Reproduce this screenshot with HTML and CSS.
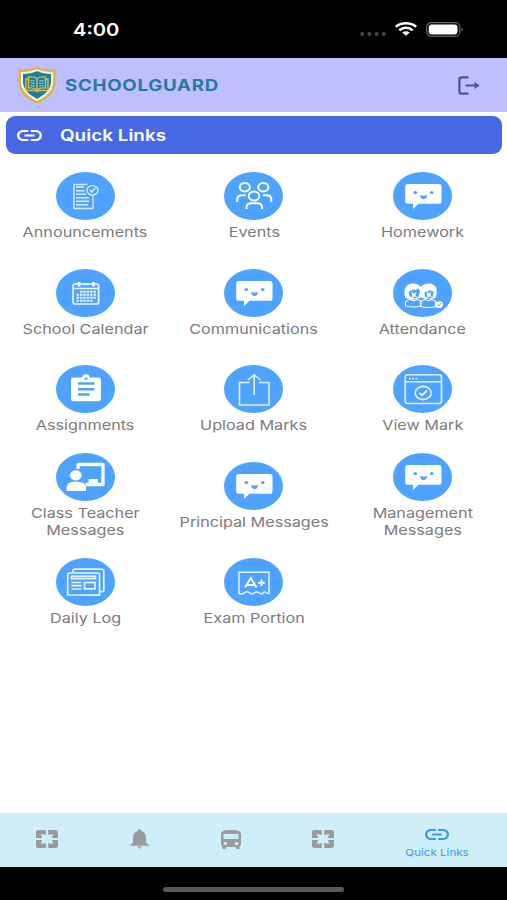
FILE: index.html
```html
<!DOCTYPE html>
<html lang="en">
<head>
    <meta charset="UTF-8">
    <meta name="viewport" content="width=device-width, initial-scale=1.0">
    <title>Schoolguard</title>
    <link rel="stylesheet" href="styles.css">
</head>
<body>
    <!-- Shared icons -->
    <svg class="defs" width="0" height="0">
        <symbol id="chat" viewBox="0 0 58 48">
            <path fill="#fff" d="M14.500 12h31q2.500 0 2.500 2.400v14.800q0 2.600-2.500 2.600H25l-5.500 5.200v-5.200h-5q-2.800 0-2.800-2.600V14.400q0-2.400 2.800-2.400z"/>
            <ellipse cx="21.800" cy="20.500" rx="1.800" ry="1.500" fill="#4da3ff"/>
            <ellipse cx="38.200" cy="20.500" rx="1.800" ry="1.500" fill="#4da3ff"/>
            <path fill="#4da3ff" d="M26.700 23q3.400 1 6.800 0 0 4-3.400 4t-3.400-4z"/>
        </symbol>
        <symbol id="link" viewBox="2 7 20 10" preserveAspectRatio="none">
            <path fill="currentColor" d="M3.900 12c0-1.710 1.390-3.100 3.100-3.100h4V7H7c-2.760 0-5 2.240-5 5s2.240 5 5 5h4v-1.900H7c-1.710 0-3.100-1.390-3.100-3.100zM8 13h8v-2H8v2zm9-6h-4v1.900h4c1.710 0 3.100 1.390 3.100 3.100s-1.390 3.100-3.100 3.100h-4V17h4c2.760 0 5-2.240 5-5s-2.240-5-5-5z"/>
        </symbol>
        <symbol id="pages" viewBox="3 3 18 18" preserveAspectRatio="none">
            <path fill="#9b9b9b" d="M3 5v6h5L7 7l4 1V3H5c-1.100 0-2 .9-2 2zm5 8H3v6c0 1.100.9 2 2 2h6v-5l-4 1 1-4zm9 4l-4-1v5h6c1.100 0 2-.9 2-2v-6h-5l1 4zm2-14h-6v5l4-1-1 4h5V5c0-1.100-.9-2-2-2z"/>
        </symbol>
    </svg>

    <div class="status-bar">
        <span class="time">4:00</span>
        <div class="status-icons">
            <svg width="26" height="6" viewBox="0 0 26 6" fill="#48484a">
                <circle cx="2.200" cy="3" r="2"/>
                <circle cx="9.400" cy="3" r="2"/>
                <circle cx="16.600" cy="3" r="2"/>
                <circle cx="23.800" cy="3" r="2"/>
            </svg>
            <svg class="wifi" width="22" height="14" viewBox="0 0 22 14">
                <g fill="none" stroke="#fff" stroke-width="2.600">
                    <path d="M.8 4.800Q5.200 1.300 11 1.300t10.200 3.500"/>
                    <path d="M4.300 8.400Q7.200 5.700 11 5.700t6.700 2.700"/>
                </g>
                <path fill="#fff" d="M7.200 10.600Q11 7.800 14.800 10.600L11 13.800z"/>
            </svg>
            <svg class="battery" width="38" height="15" viewBox="0 0 38 15">
                <rect x=".7" y=".7" width="33" height="13.600" rx="4.500" fill="none" stroke="#636366" stroke-width="1.200"/>
                <rect x="2.700" y="2.600" width="28.800" height="9.800" rx="3" fill="#fff"/>
                <path d="M35.300 5.200q1.600.7 1.600 2.300t-1.600 2.300z" fill="#636366"/>
            </svg>
        </div>
    </div>

    <header class="header">
        <svg class="logo" width="38" height="38" viewBox="0 0 38 38">
            <path fill="#dfb23c" d="M19 .500Q25 4 37.400 3.500V17Q37 30 19 37.600 1 30 .6 17V3.500Q13 4 19 .500z"/>
            <path fill="#eef4f2" d="M19 3Q25 6 35.200 6V17Q34 28 19 35 4 28 2.800 17V6Q13 6 19 3z"/>
            <path fill="#1f7d9d" d="M19 5Q25 8 33 8V17Q32 26 19 33 6 26 5 17V8Q13 8 19 5z"/>
            <path fill="none" stroke="#d5bd52" stroke-width="1.400" d="M19 12.500Q16 10.500 10.500 11V22Q16 21.500 19 24 22 21.500 27.500 22V11Q22 10.500 19 12.500zV24M10 13H8V24.500H17L19 25.500 21 24.500H30V13H28"/>
            <path stroke="#9fd0ce" stroke-width="1" d="M12.500 14.500l4.500.6M12.500 17l4.500.6M12.500 19.500l4.500.6M25.500 14.500l-4.500.6M25.500 17l-4.500.6M25.500 19.500l-4.500.6"/>
        </svg>
        <span class="brand">SCHOOLGUARD</span>
        <svg class="logout" width="22" height="19" viewBox="0 0 22 19">
            <path d="M10.500 1.400H3.400Q1.400 1.400 1.400 3.200V15.800Q1.400 17.600 3.400 17.600H10.500" fill="none" stroke="#4a5589" stroke-width="2.200"/>
            <path d="M7.500 8.400H16.500V6L21.600 9.500 16.500 13V10.600H7.500z" fill="#4a5589"/>
        </svg>
    </header>

    <div class="banner">
        <svg width="25" height="11"><use href="#link"/></svg>
        <span class="banner-title">Quick Links</span>
    </div>

    <main class="links">
        <div class="link">
            <svg class="icon" viewBox="0 0 58 48">
                <g fill="none" stroke="#d9ecff" stroke-width="1.400">
                    <path d="M31 12.500H17.500V36.500H36.500V24"/>
                    <path d="M19.500 15h8M19.500 18.800h8.500M19.500 22.300h10M19.500 25.800h13M19.500 29.300h13M19.500 32.800h12"/>
                    <ellipse cx="36" cy="18.300" rx="5.600" ry="4.700"/>
                    <path d="M33.500 18l1.700 2L39 15.500"/>
                </g>
            </svg>
            <span class="label">Announcements</span>
        </div>
        <div class="link">
            <svg class="icon" viewBox="0 0 58 48">
                <g fill="none" stroke="#fff" stroke-width="2">
                    <ellipse cx="20.300" cy="15.300" rx="5.100" ry="4.300"/>
                    <ellipse cx="38.800" cy="15.300" rx="5.100" ry="4.300"/>
                    <ellipse cx="29.500" cy="24" rx="5.300" ry="4.500"/>
                    <path d="M12.700 30V27.500Q12.700 23.200 18 23.200H21M46.800 30V27.500Q46.800 23.200 41.500 23.200H38.500"/>
                    <path d="M22 37V35.500Q22 31.300 27 31.300H32.500Q37.500 31.300 37.500 35.500V37"/>
                </g>
            </svg>
            <span class="label">Events</span>
        </div>
        <div class="link">
            <svg class="icon"><use href="#chat"/></svg>
            <span class="label">Homework</span>
        </div>

        <div class="link">
            <svg class="icon" viewBox="0 0 58 48">
                <rect x="16.600" y="15" width="25.500" height="20" rx="2" fill="none" stroke="#eef7ff" stroke-width="1.700"/>
                <path d="M16.500 19.500H42M26 15.500H33" stroke="#eef7ff" stroke-width="1.300"/>
                <path d="M22.500 13V17.500M37 13V17.500" stroke="#eef7ff" stroke-width="2.800"/>
                <path d="M23.400 22.700H39.500M20 25.700H39.500M20 28.700H39.500M20 31.700H36" stroke="#e3f1ff" stroke-width="2.100" stroke-dasharray="2.500 .9"/>
            </svg>
            <span class="label">School Calendar</span>
        </div>
        <div class="link">
            <svg class="icon"><use href="#chat"/></svg>
            <span class="label">Communications</span>
        </div>
        <div class="link">
            <svg class="icon" viewBox="0 0 58 48">
                <path fill="#fff" d="M12 29Q10 25 11.500 20 13 14.500 19.500 14.500 25 14.500 27.300 18 30 14.500 35 14.500 41.500 14.500 43 20 44 25 42 29 34 31.500 27.500 28.500 20 32 12 29z"/>
                <path fill="#4da3ff" d="M15 23l4-2.500 3 .5 3.500-1.500 1 3-1.500 5.500-5 1.500-4-2.500zM31 22.500l3 .5 2-2 4.500 2-1.500 5-4 2-3.500-2.500z"/>
                <path fill="#fff" d="M18 22.500l2 2 3-1.500-1 3 1.500 2-3-.5-2 2 .2-3.300zM33 23l2 1.500 2.500-1.500-.5 3 1.500 2-3-.5-2 2 .2-3.300z"/>
                <path fill="#4da3ff" stroke="#fff" stroke-width="1.100" d="M12 37V34Q12 31 17 30.500L20 32 23 30.500Q27.500 31 27.500 34V37Q20 39 12 37zM27 37.500V34Q28 31 32 30.500L35 32 38 30.500Q42 31 42.500 34V37.500Q35 39.500 27 37.500z"/>
                <ellipse cx="45.500" cy="35.700" rx="4" ry="3.400" fill="#fff"/>
                <path d="M43.700 35.500l1.300 1.500 2.700-3" fill="none" stroke="#4da3ff"/>
            </svg>
            <span class="label">Attendance</span>
        </div>

        <div class="link">
            <svg class="icon" viewBox="0 0 58 48">
                <path fill="#fff" d="M17 12.500H25.500Q26.300 9.200 29.500 9.200T33.500 12.500H42Q44.500 12.500 44.500 14.700V34Q44.500 36.300 42 36.300H17Q14.500 36.300 14.500 34V14.700Q14.500 12.500 17 12.500z"/>
                <path d="M21.500 18.500H38M21.500 24.200H38M21.500 29.500H33" stroke="#4da3ff" stroke-width="2.500"/>
                <ellipse cx="29.500" cy="13.600" rx="1.500" ry="1.200" fill="#4da3ff"/>
            </svg>
            <span class="label">Assignments</span>
        </div>
        <div class="link">
            <svg class="icon" viewBox="0 0 58 48">
                <g fill="none" stroke="#e3f1ff" stroke-width="1.600">
                    <path d="M25 17.500H15V40H44.500V17.500H34.500"/>
                    <path d="M29.700 30V10M23.500 15L29.700 9.800 36 15"/>
                </g>
            </svg>
            <span class="label">Upload Marks</span>
        </div>
        <div class="link">
            <svg class="icon" viewBox="0 0 58 48">
                <g fill="none" stroke="#e3f1ff" stroke-width="1.600">
                    <rect x="11.700" y="9.800" width="36.300" height="28.700" rx="2.500"/>
                    <path d="M11.700 16.700H48"/>
                    <ellipse cx="29.700" cy="28" rx="8" ry="6.600"/>
                    <path d="M26 28l2.600 2.300 5-4.800" stroke-width="1.900"/>
                    <path d="M15.500 13.600H24" stroke-dasharray="1.700 1.600"/>
                </g>
            </svg>
            <span class="label">View Mark</span>
        </div>

        <div class="link">
            <svg class="icon" viewBox="0 0 58 48">
                <path d="M21.500 16V12Q21.500 11.500 22.500 11.500H46.500V31.500H29" fill="none" stroke="#fff" stroke-width="3.300" stroke-linejoin="round"/>
                <rect x="32" y="26" width="9.500" height="5" fill="#fff"/>
                <ellipse cx="19.300" cy="22.300" rx="5.900" ry="5.100" fill="#fff"/>
                <path d="M10 38V34.500Q10.500 29 17 28.700H22Q29 29 29.500 34.500V38z" fill="#fff"/>
            </svg>
            <span class="label">Class Teacher<br>Messages</span>
        </div>
        <div class="link">
            <svg class="icon"><use href="#chat"/></svg>
            <span class="label">Principal Messages</span>
        </div>
        <div class="link">
            <svg class="icon"><use href="#chat"/></svg>
            <span class="label">Management<br>Messages</span>
        </div>

        <div class="link">
            <svg class="icon" viewBox="0 0 58 48">
                <g fill="none" stroke="#e9f4ff" stroke-width="1.700">
                    <path d="M16.500 14.500V13Q16.500 11.200 18.500 11.200H45Q47.300 11.200 47.300 13V32Q47.300 33.700 45 33.700H43.500"/>
                    <path d="M11.200 37V17Q11.200 15 13.200 15H41Q43 15 43 17V37.200z"/>
                    <rect x="15" y="18.300" width="24" height="2.300"/>
                    <rect x="28" y="24.500" width="10.500" height="6.300"/>
                    <path d="M15 24.500H25M15 27.700H25M15 31H25"/>
                </g>
            </svg>
            <span class="label">Daily Log</span>
        </div>
        <div class="link">
            <svg class="icon" viewBox="0 0 58 48">
                <path d="M14.500 35.500V14.200H44.500V35.500Q42 35.500 40 33.800 37 37 34.500 34.800 32 33 29.500 35 27 37 24.500 34.500 22 32.800 19.500 35.300 17 36.500 14.500 35.500z" fill="none" stroke="#e9f4ff" stroke-width="1.500"/>
                <path d="M20.500 29.500L26.300 20 32 29.500M22.500 27H30M33.500 24.700H40.500M37 21.500V28" fill="none" stroke="#fff" stroke-width="1.900"/>
            </svg>
            <span class="label">Exam Portion</span>
        </div>
    </main>

    <nav class="tabs">
        <div class="tab"><svg width="22" height="18"><use href="#pages"/></svg></div>
        <div class="tab">
            <svg width="19" height="20" viewBox="0 0 19 20" fill="#9b9b9b">
                <path d="M9.500 0Q11.300 0 11.300 2 16 3.300 16 8.500V13.500L18.700 15.700V16.700H.3V15.700L3 13.500V8.500Q3 3.300 7.700 2 7.700 0 9.500 0zM7.300 17.500H11.700Q11.300 19.500 9.500 19.500T7.300 17.500z"/>
            </svg>
        </div>
        <div class="tab">
            <svg width="20" height="19" viewBox="4 2 16 19" preserveAspectRatio="none">
                <path fill="#9b9b9b" d="M4 16c0 .88.39 1.670 1 2.220V20c0 .55.45 1 1 1h1c.55 0 1-.45 1-1v-1h8v1c0 .55.45 1 1 1h1c.55 0 1-.45 1-1v-1.780c.61-.55 1-1.340 1-2.220V6c0-3.500-3.580-4-8-4s-8 .5-8 4v10zm3.500 1c-.83 0-1.500-.67-1.500-1.500S6.670 14 7.500 14s1.500.67 1.500 1.500S8.330 17 7.500 17zm9 0c-.83 0-1.500-.67-1.500-1.500s.67-1.500 1.500-1.500 1.500.67 1.500 1.500-.67 1.500-1.500 1.500zm1.500-6H6V6h12v5z"/>
            </svg>
        </div>
        <div class="tab"><svg width="22" height="18"><use href="#pages"/></svg></div>
        <div class="tab active">
            <svg width="24" height="11"><use href="#link"/></svg>
            <span class="tab-label">Quick Links</span>
        </div>
    </nav>

    <div class="home-area">
        <div class="home-indicator"></div>
    </div>
</body>
</html>
```
FILE: styles.css
```css
* {
    box-sizing: border-box;
}
body {
    display: flex;
    flex-direction: column;
    height: 900px;
    margin: 0;
    overflow: hidden;
    background-color: #fff;
    font-family: Inter, "Liberation Sans", sans-serif;
}
svg {
    display: block;
    flex: none;
}
.defs {
    display: none;
}
.status-bar {
    display: flex;
    justify-content: space-between;
    align-items: center;
    height: 58px;
    padding: 0 43px 0 73px;
    background-color: #000;
    color: #fff;
}
.time {
    font-size: 17.5px;
    font-weight: 600;
    transform: scaleX(1.15);
    transform-origin: left;
}
.status-icons {
    display: flex;
    align-items: center;
}
.status-icons svg:first-child {
    margin-top: 9px;
}
.wifi {
    margin-left: 9px;
}
.battery {
    margin-left: 9px;
}
.header {
    display: flex;
    align-items: center;
    height: 54px;
    padding: 0 27px 0 18px;
    background-color: #bebfff;
}
.brand {
    margin: 0 auto 0 9px;
    color: #277a9f;
    font-size: 16px;
    font-weight: 700;
    letter-spacing: 0.6px;
    transform: scaleX(1.17);
    transform-origin: left;
}
.banner {
    display: flex;
    align-items: center;
    height: 38px;
    margin: 4px 5px 0 6px;
    padding-left: 11px;
    border-radius: 9px;
    background-color: #4769e6;
    color: #fff;
}
.banner-title {
    margin-left: 18px;
    font-size: 15.5px;
    font-weight: 600;
    transform: scaleX(1.22);
    transform-origin: left;
}
.links {
    flex: 1;
    display: grid;
    grid-template-columns: repeat(3, 1fr);
    grid-auto-rows: 96.5px;
    align-content: start;
    align-items: center;
    padding: 4px 0 0 1px;
}
.link {
    display: flex;
    flex-direction: column;
    align-items: center;
}
.icon {
    width: 59px;
    height: 48px;
    border-radius: 50%;
    background-color: #4da3ff;
}
.label {
    margin-top: 4px;
    color: #7b7b7b;
    font-size: 13.5px;
    line-height: 16.4px;
    text-align: center;
    white-space: nowrap;
    transform: scaleX(1.2);
}
.tabs {
    display: flex;
    height: 54px;
    padding: 0 2px 0 1px;
    background-color: #ceeef9;
}
.tab {
    display: flex;
    flex-direction: column;
    align-items: center;
    justify-content: center;
    width: 92px;
    padding-bottom: 2px;
}
.tab.active {
    flex: 1;
    padding: 8px 0 0;
    color: #3b98ed;
}
.tab-label {
    margin-top: 6px;
    font-size: 9.5px;
    line-height: 13px;
    transform: scaleX(1.22);
}
.home-area {
    display: flex;
    justify-content: center;
    height: 33px;
    padding-top: 20px;
    background-color: #000;
}
.home-indicator {
    width: 181px;
    height: 5px;
    border-radius: 3px;
    background-color: #59595b;
}
```
